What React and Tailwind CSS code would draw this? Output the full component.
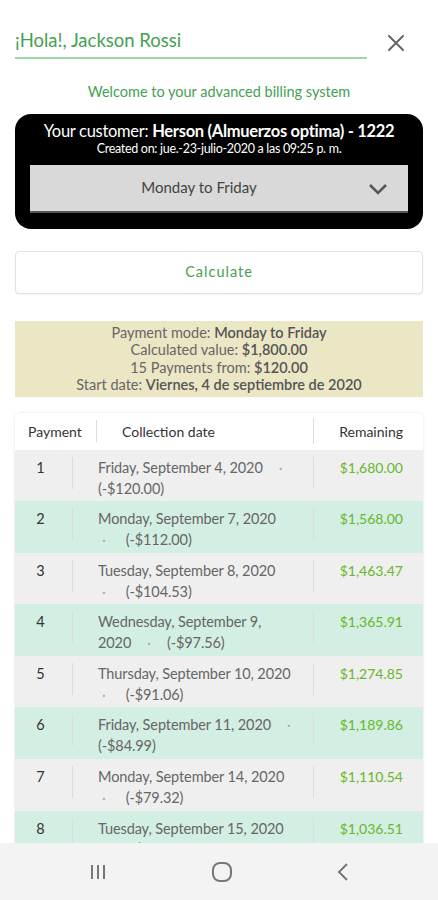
import React from "react";

const rows = [
  { n: 1, date: "Friday, September 4, 2020", amt: "(-$120.00)", left: "$1,680.00", inline: true },
  { n: 2, date: "Monday, September 7, 2020", amt: "(-$112.00)", left: "$1,568.00" },
  { n: 3, date: "Tuesday, September 8, 2020", amt: "(-$104.53)", left: "$1,463.47" },
  { n: 4, date: "Wednesday, September 9,", tail: "2020", amt: "(-$97.56)", left: "$1,365.91" },
  { n: 5, date: "Thursday, September 10, 2020", amt: "(-$91.06)", left: "$1,274.85" },
  { n: 6, date: "Friday, September 11, 2020", amt: "(-$84.99)", left: "$1,189.86", inline: true },
  { n: 7, date: "Monday, September 14, 2020", amt: "(-$79.32)", left: "$1,110.54" },
  { n: 8, date: "Tuesday, September 15, 2020", amt: "(-$74.01)", left: "$1,036.51" },
];

function DateCell({ row }) {
  if (row.inline) {
    return (
      <div>
        <div>
          {row.date}
          <span className="ml-4 text-[#aaa]">·</span>
        </div>
        <div>{row.amt}</div>
      </div>
    );
  }
  if (row.tail) {
    return (
      <div>
        <div>{row.date}</div>
        <div>
          {row.tail}
          <span className="mx-4 text-[#aaa]">·</span>
          {row.amt}
        </div>
      </div>
    );
  }
  return (
    <div>
      <div>{row.date}</div>
      <div>
        <span className="ml-1 mr-5 text-[#aaa]">·</span>
        {row.amt}
      </div>
    </div>
  );
}

export default function App() {
  return (
    <div
      className="flex h-[900px] w-[438px] flex-col overflow-hidden bg-white text-[#555]"
      style={{ fontFamily: "Lato, 'Open Sans', sans-serif" }}
    >
      <div className="flex-1 overflow-hidden px-[15px]">
        <div className="flex items-center pt-[27px]">
          <div className="mr-[19px] flex-1 border-b-2 border-[#9fd6a8] pb-[2px] text-[18.5px] text-[#46a052]">
            ¡Hola!, Jackson Rossi
          </div>
          <svg width="20" height="20" viewBox="0 0 20 20" className="mr-[17px]">
            <path d="M3 3 L17 17 M17 3 L3 17" stroke="#666" strokeWidth="2" strokeLinecap="round" />
          </svg>
        </div>

        <div className="mt-[22px] text-center text-[14.5px] text-[#46a052]">
          Welcome to your advanced billing system
        </div>

        <div className="mt-[11px] rounded-[16px] bg-black px-[15px] pb-[18px] pt-[7px] text-center text-white">
          <div className="text-[16.5px] leading-[20px] tracking-[-0.3px]">
            Your customer: <span className="font-bold">Herson (Almuerzos optima) - 1222</span>
          </div>
          <div className="text-[12.5px] leading-[15px] tracking-[-0.3px]">
            Created on: jue.-23-julio-2020 a las 09:25 p. m.
          </div>
          <div className="relative mt-[9px] flex h-[46px] items-center justify-center bg-[#d8d9d8] pr-[40px] text-[15px] text-[#444] shadow-[0_2px_0_#555]">
            Monday to Friday
            <svg width="20" height="12" viewBox="0 0 20 12" className="absolute right-[20px] top-[18px]">
              <path d="M2 2 L10 10 L18 2" stroke="#555" strokeWidth="2.5" fill="none" />
            </svg>
          </div>
        </div>

        <div className="mt-[22px] flex h-[43px] items-center justify-center rounded-[4px] border border-[#e2e2e2] bg-white text-[14.5px] tracking-[1px] text-[#46a052] shadow-[0_1px_2px_rgba(0,0,0,0.06)]">
          Calculate
        </div>

        <div className="mt-[27px] bg-[#ebe7c5] py-[3px] text-center text-[14.5px] leading-[17.5px] text-[#666]">
          <div>
            Payment mode: <span className="font-semibold text-[#555]">Monday to Friday</span>
          </div>
          <div>
            Calculated value: <span className="font-semibold text-[#555]">$1,800.00</span>
          </div>
          <div>
            15 Payments from: <span className="font-semibold text-[#555]">$120.00</span>
          </div>
          <div>
            Start date: <span className="font-semibold text-[#555]">Viernes, 4 de septiembre de 2020</span>
          </div>
        </div>

        <div className="mt-[16px] overflow-hidden rounded-t-[6px] shadow-[0_0_3px_rgba(0,0,0,0.12)]">
          <div className="flex h-[37px] items-center bg-white text-[14px] text-[#333]">
            <div className="flex h-[22px] w-[82px] items-center border-r border-[#ddd] pl-[13px]">Payment</div>
            <div className="flex-1 pl-[25px]">Collection date</div>
            <div className="flex h-[26px] w-[110px] items-center justify-end border-l border-[#ddd] pr-[20px]">
              Remaining
            </div>
          </div>
          {rows.map((r, i) => (
            <div
              key={r.n}
              className={`flex h-[51.6px] items-start pt-[7px] text-[14.5px] leading-[21px] ${
                i % 2 === 0 ? "bg-[#efefef]" : "bg-[#d3eee2]"
              }`}
            >
              <div className="flex h-[32px] w-[58px] justify-center border-r border-[#dcdcdc] pr-[6px] text-[#333]">
                {r.n}
              </div>
              <div className="flex-1 pl-[25px] tracking-[-0.1px] text-[#666]">
                <DateCell row={r} />
              </div>
              <div className="flex h-[32px] w-[110px] justify-end border-l border-[#dcdcdc] pr-[20px] text-[14px] text-[#67b82c]">
                {r.left}
              </div>
            </div>
          ))}
        </div>
      </div>

      <div className="flex h-[57px] shrink-0 items-center justify-between bg-[#f3f3f3] px-[88px]">
        <svg width="20" height="18" viewBox="0 0 20 18">
          <path d="M4 2 V16 M10 2 V16 M16 2 V16" stroke="#777" strokeWidth="2" />
        </svg>
        <svg width="22" height="22" viewBox="0 0 22 22">
          <rect x="2" y="2" width="18" height="18" rx="7" stroke="#777" strokeWidth="2" fill="none" />
        </svg>
        <svg width="14" height="20" viewBox="0 0 14 20">
          <path d="M11 2 L3 10 L11 18" stroke="#777" strokeWidth="2" fill="none" />
        </svg>
      </div>
    </div>
  );
}
